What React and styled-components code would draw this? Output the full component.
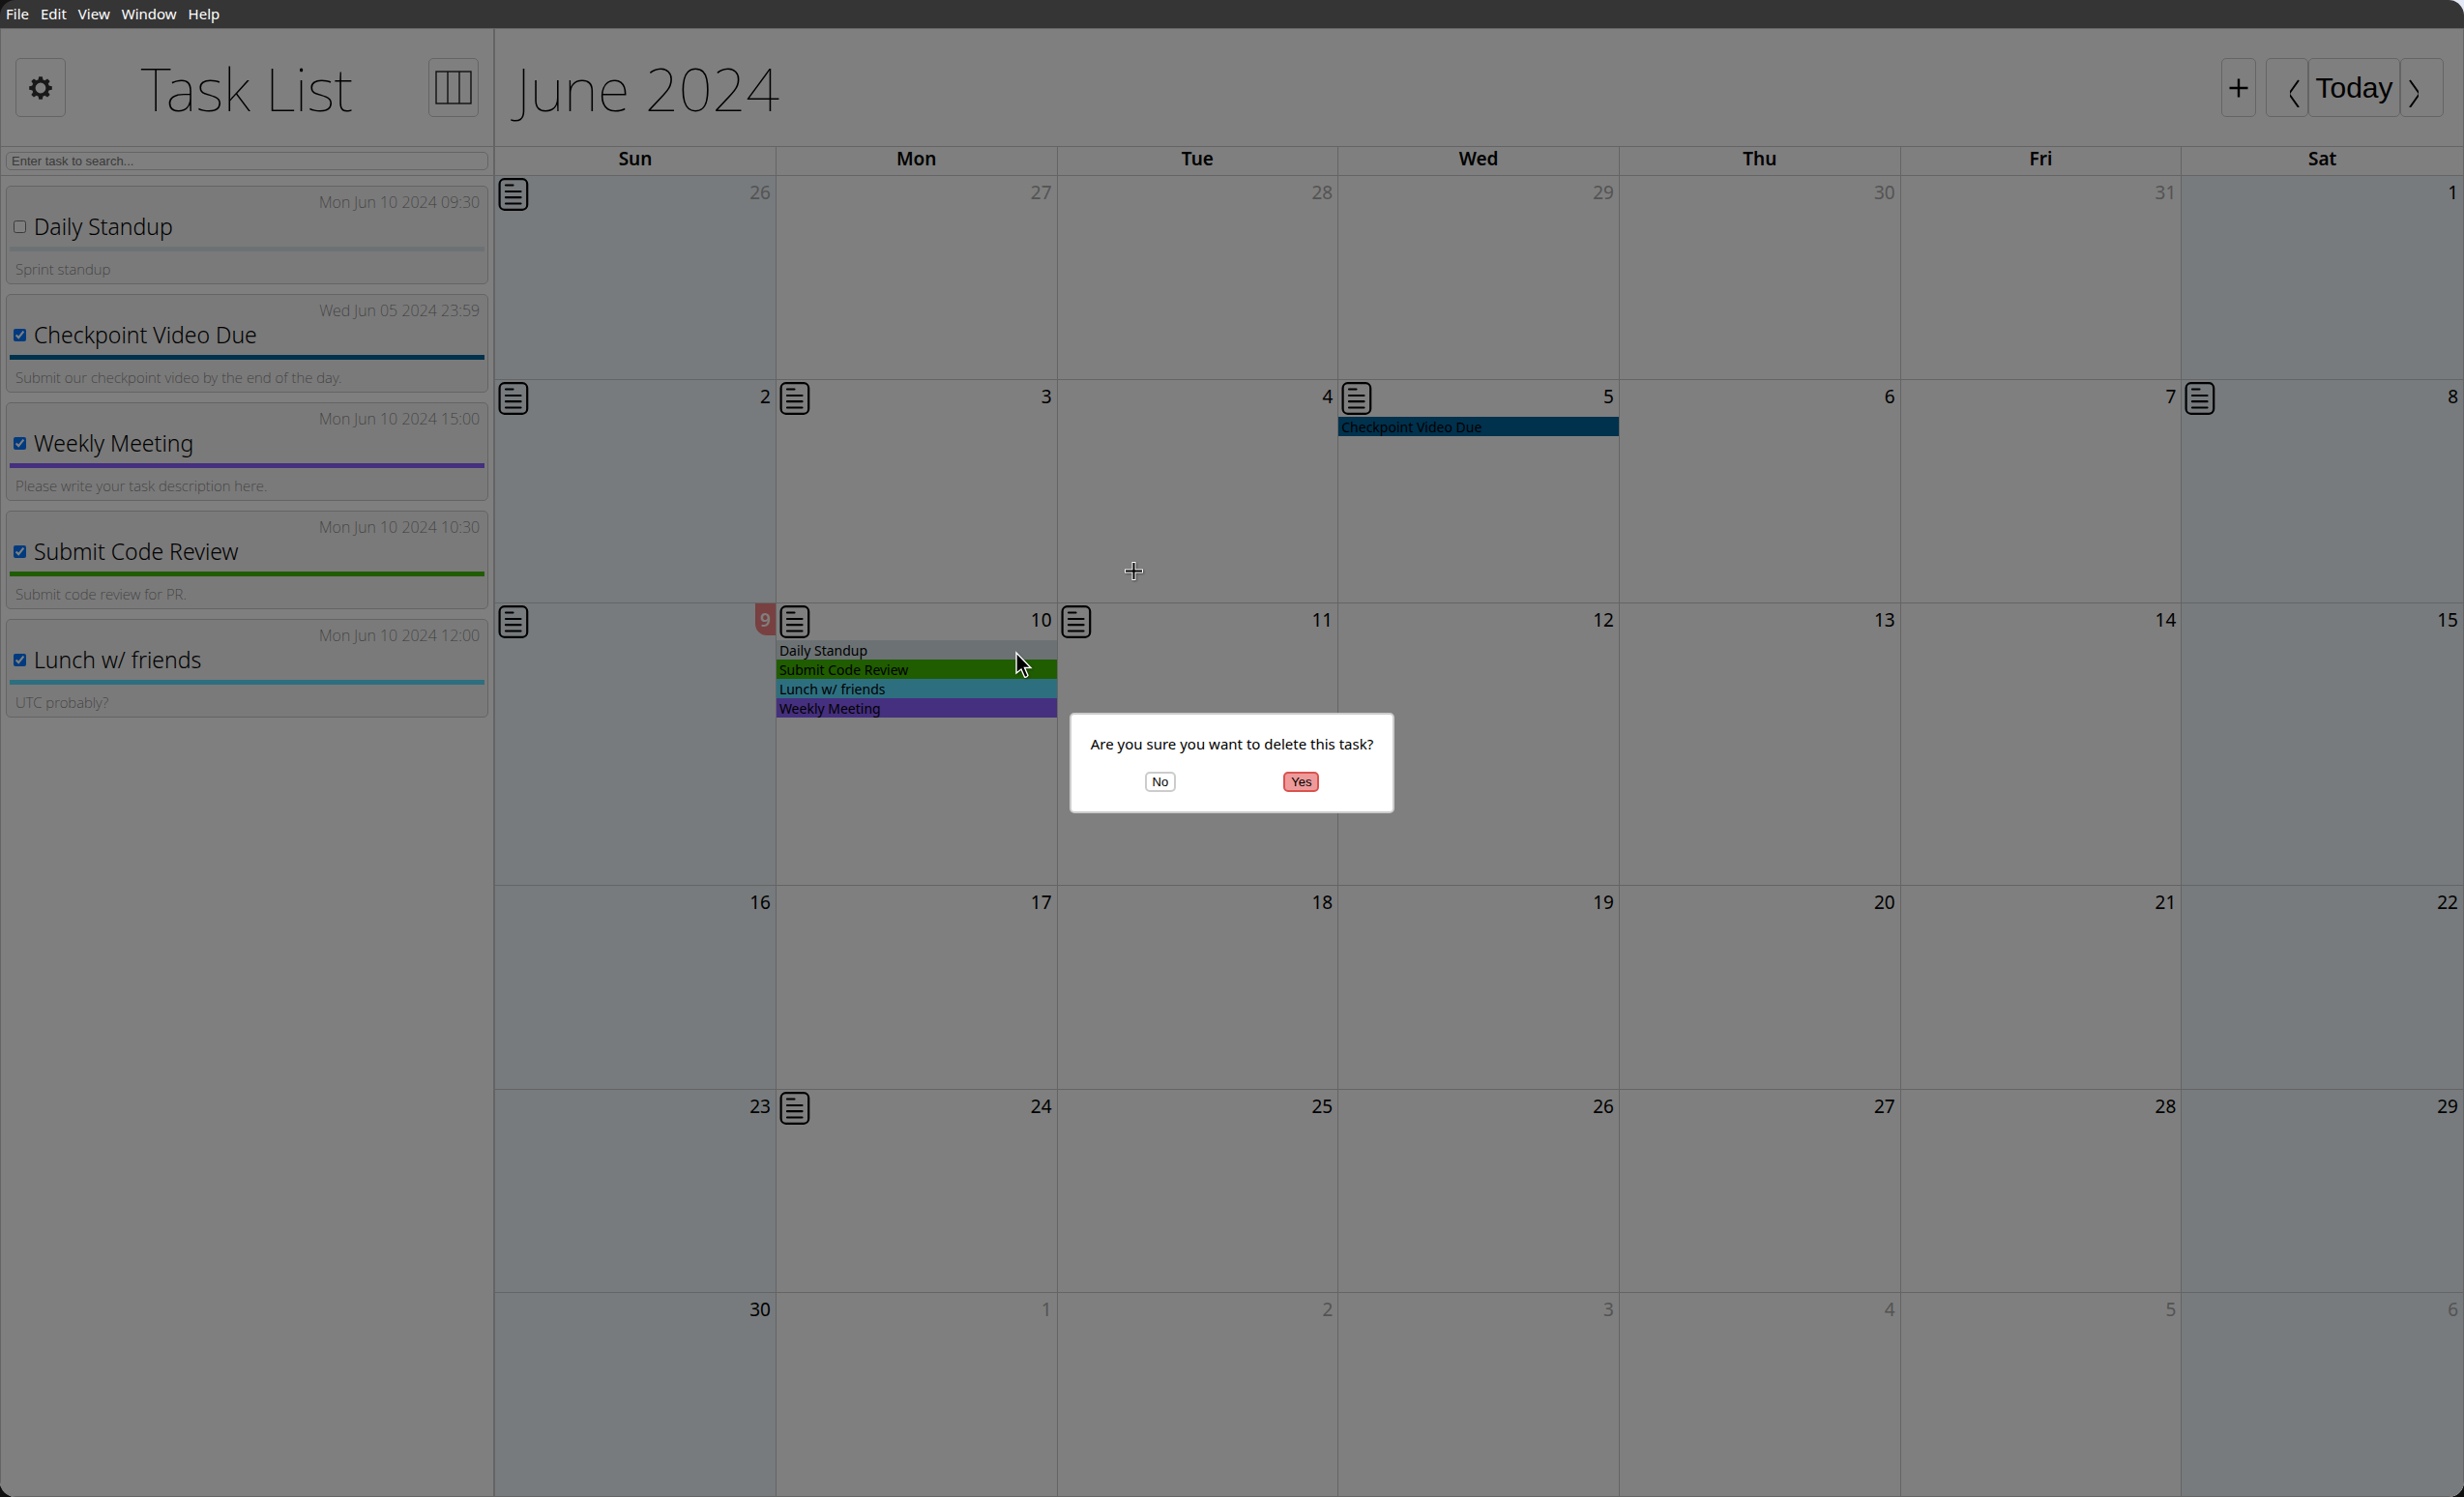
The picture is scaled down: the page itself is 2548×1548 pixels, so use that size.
import React from "react";
import styled, { createGlobalStyle } from "styled-components";

const LINE = "#c8c8c8";

const GlobalStyle = createGlobalStyle`
  * { box-sizing: border-box; }
  html, body, #root { height: 100%; }
  body {
    margin: 0;
    overflow: hidden;
    background: linear-gradient(90deg, #141414 50%, #e4e8f4 50%) top / 100% 50% no-repeat, #101010;
    font-family: "Noto Sans", sans-serif;
    font-size: 16px;
    color: #000;
  }
  button, input { font-family: "Liberation Sans", Arial, sans-serif; color: inherit; }
`;

const AppWindow = styled.div`
  height: 100vh;
  display: flex;
  flex-direction: column;
  border-radius: 16px;
  overflow: hidden;
`;

const MenuBar = styled.nav`
  flex: none;
  height: 29px;
  display: flex;
  align-items: flex-start;
  gap: 12px;
  padding: 4px 6px;
  background: #353535;
`;

const MenuItem = styled.button`
  border: 0;
  padding: 0;
  background: none;
  color: #fff;
  font: 400 15px/20px "Noto Sans", sans-serif;
`;

const Workspace = styled.main`
  flex: 1;
  min-height: 0;
  display: flex;
  position: relative;
  background: #fff;
  border: 1px solid ${LINE};
`;

const Sidebar = styled.aside`
  box-sizing: content-box;
  width: 20%;
  flex: none;
  display: flex;
  flex-direction: column;
  border-right: 2px solid ${LINE};
`;

const PaneHeader = styled.header`
  flex: none;
  height: 122px;
  display: flex;
  align-items: center;
  justify-content: space-between;
  padding: ${(p) => (p.$wide ? "0 20px 0 22px" : "0 15px")};
  border-bottom: 1px solid ${LINE};
`;

const Title = styled.h1`
  margin: 0;
  padding-top: 2px;
  font-size: 61px;
  font-weight: 100;
  line-height: 80px;
  white-space: nowrap;
`;

const ToolButton = styled.button`
  width: ${(p) => p.$width};
  height: 61px;
  padding: 0;
  display: flex;
  align-items: center;
  justify-content: ${(p) => p.$align || "center"};
  background: #fff;
  border: 1px solid ${LINE};
  border-radius: 5px;
  font-size: 30px;
`;

const Tools = styled.div`
  display: flex;
  gap: 10px;
`;

const Pager = styled.div`
  display: flex;
`;

const SearchBar = styled.div`
  flex: none;
  height: 30px;
  display: flex;
  align-items: center;
  padding: 0 5px;
  border-bottom: 1px solid ${LINE};
`;

const SearchInput = styled.input`
  flex: 1;
  height: 19px;
  padding: 0 5px;
  background: #fff;
  border: 1px solid ${LINE};
  border-radius: 5px;
  font-size: 13px;
  &::placeholder { color: #757575; }
`;

const TaskList = styled.ul`
  list-style: none;
  margin: 0;
  padding: 10px 5px;
  display: flex;
  flex-direction: column;
  gap: 10px;
`;

const TaskCard = styled.li`
  display: flex;
  flex-direction: column;
  height: 102px;
  padding: 6px 3px 0;
  background: #f4f4f4;
  border: 1px solid ${LINE};
  border-radius: 5px;
`;

const TaskDate = styled.time`
  align-self: flex-end;
  padding-right: 5px;
  font-size: 16px;
  font-weight: 200;
  line-height: 20px;
  color: #777;
`;

const TaskName = styled.label`
  display: flex;
  align-items: center;
  gap: 8px;
  padding-left: 4px;
  font-size: 23px;
  font-weight: 300;
  line-height: 30px;
`;

const TaskCheck = styled.input`
  width: 13px;
  height: 13px;
  margin: 0;
`;

const TaskBar = styled.div`
  height: 5px;
  margin-top: 6px;
  background: ${(p) => p.$color};
`;

const TaskNote = styled.p`
  margin: 7px 6px 0;
  font-size: 15px;
  font-weight: 200;
  line-height: 22px;
  color: #777;
`;

const Calendar = styled.section`
  flex: 1;
  min-width: 0;
  display: flex;
  flex-direction: column;
`;

const Week = styled.div`
  flex: ${(p) => (p.$head ? "0 0 30px" : "1 1 auto")};
  display: grid;
  grid-template-columns: repeat(7, minmax(0, 1fr));
  border-bottom: 1px solid ${LINE};
  &:last-child { border-bottom: 0; }
`;

const Weekday = styled.div`
  font-weight: 600;
  font-size: 19px;
  line-height: 25px;
  text-align: center;
  border-right: 1px solid ${LINE};
  &:last-child { border-right: 0; }
`;

const Day = styled.div`
  background: ${(p) => (p.$weekend ? "#eef6fb" : "#fff")};
  border-right: 1px solid ${LINE};
  &:last-child { border-right: 0; }
`;

const DayTop = styled.div`
  height: 38px;
  display: flex;
  justify-content: space-between;
  align-items: flex-start;
  padding-left: 3px;
`;

const DayNumber = styled.span`
  margin-left: auto;
  padding: 0 5px;
  height: 33px;
  font-size: 19px;
  line-height: 34px;
  font-weight: ${(p) => (p.$today ? 600 : 400)};
  color: ${(p) => (p.$today ? "#fff" : p.$muted ? "#a8a8a8" : "#000")};
  background: ${(p) => (p.$today ? "#f08080" : "none")};
  border-bottom-left-radius: 12px;
`;

const NoteButton = styled.button`
  margin-top: 2px;
  padding: 0;
  width: 32px;
  height: 34px;
  border: 0;
  background: none;
`;

const EventList = styled.div`
  padding-bottom: 1px;
`;

const Event = styled.div`
  height: 20px;
  padding: 0 3px;
  font-size: 14px;
  line-height: 21px;
  white-space: nowrap;
  background: ${(p) => p.$color};
`;

const Backdrop = styled.div`
  position: absolute;
  inset: -1px;
  display: flex;
  align-items: center;
  justify-content: center;
  background: rgba(0, 0, 0, 0.5);
`;

const Dialog = styled.div`
  width: 336px;
  height: 104px;
  display: flex;
  flex-direction: column;
  align-items: center;
  padding-top: 19px;
  background: #fff;
  border: 2px solid #ccc;
  border-radius: 5px;
`;

const Question = styled.p`
  margin: 0;
  font-size: 15px;
  line-height: 22px;
  white-space: nowrap;
`;

const Answers = styled.div`
  align-self: stretch;
  display: flex;
  justify-content: space-around;
  padding: 18px 20px 0;
`;

const AnswerButton = styled.button`
  height: 21px;
  padding: 0 6px;
  font-size: 13px;
  border: 2px solid ${(p) => (p.$danger ? "#d9534f" : "#ccc")};
  background: ${(p) => (p.$danger ? "#ee9a9a" : "#fff")};
  border-radius: 5px;
`;

const Pointer = styled.svg`
  position: absolute;
  left: ${(p) => p.$x};
  top: ${(p) => p.$y};
  overflow: visible;
  filter: drop-shadow(1px 1px 1px rgba(0, 0, 0, 0.4));
`;

const GearIcon = () => (
  <svg width="24" height="24" viewBox="-12 -12 24 24" aria-hidden="true">
    <circle r="7.2" fill="none" stroke="#333" strokeWidth="3.6" />
    {[0, 45, 90, 135, 180, 225, 270, 315].map((a) => (
      <path key={a} d="M-2.6-8 -1.8-11.8H1.8L2.6-8Z" fill="#333" transform={`rotate(${a})`} />
    ))}
  </svg>
);

const ColumnsIcon = () => (
  <svg width="38" height="35" viewBox="0 0 38 35" fill="none" stroke="#222" strokeWidth="1.4" aria-hidden="true">
    <rect x="1" y="1" width="36" height="33" />
    <path d="M13 1V34M25 1V34" />
  </svg>
);

const PlusIcon = () => (
  <svg width="20" height="20" viewBox="0 0 20 20" stroke="#000" strokeWidth="2.4" aria-hidden="true">
    <path d="M.5 10H19.5M10 .5V19.5" />
  </svg>
);

const AngleIcon = ({ d }) => (
  <svg width="18" height="40" viewBox="0 0 18 40" fill="none" stroke="#000" strokeWidth="2" aria-hidden="true">
    <path d={d} />
  </svg>
);

const NoteIcon = () => (
  <svg width="32" height="34" viewBox="0 0 32 34" fill="none" stroke="#000" strokeWidth="2.2" strokeLinecap="round" aria-hidden="true">
    <rect x="1.6" y="1.2" width="28.6" height="31.6" rx="5" />
    <path d="M8 7.5H15.500M8 14H23.500M8 20.200H23.500M8 26.500H23.500" />
  </svg>
);

const COLORS = {
  pale: "#d8e4e8",
  blue: "#00629b",
  purple: "#8a5eff",
  green: "#41b900",
  cyan: "#5adeff",
};

const tasks = [
  { name: "Daily Standup", date: "Mon Jun 10 2024 09:30", note: "Sprint standup", color: COLORS.pale, done: false },
  { name: "Checkpoint Video Due", date: "Wed Jun 05 2024 23:59", note: "Submit our checkpoint video by the end of the day.", color: COLORS.blue, done: true },
  { name: "Weekly Meeting", date: "Mon Jun 10 2024 15:00", note: "Please write your task description here.", color: COLORS.purple, done: true },
  { name: "Submit Code Review", date: "Mon Jun 10 2024 10:30", note: "Submit code review for PR.", color: COLORS.green, done: true },
  { name: "Lunch w/ friends", date: "Mon Jun 10 2024 12:00", note: "UTC probably?", color: COLORS.cyan, done: true },
];

const events = {
  10: [["Checkpoint Video Due", COLORS.blue]],
  15: [
    ["Daily Standup", COLORS.pale],
    ["Submit Code Review", COLORS.green],
    ["Lunch w/ friends", COLORS.cyan],
    ["Weekly Meeting", COLORS.purple],
  ],
};

const noted = new Set([0, 7, 8, 10, 13, 14, 15, 16, 29]);
const weekdays = ["Sun", "Mon", "Tue", "Wed", "Thu", "Fri", "Sat"];
const weeks = [0, 1, 2, 3, 4, 5];
const TODAY = 14;

function dayNumber(i) {
  if (i < 6) return 26 + i;
  return i < 36 ? i - 5 : i - 35;
}

function DayCell({ index }) {
  const column = index % 7;
  return (
    <Day $weekend={column === 0 || column === 6}>
      <DayTop>
        {noted.has(index) && (
          <NoteButton aria-label="Open journal">
            <NoteIcon />
          </NoteButton>
        )}
        <DayNumber $today={index === TODAY} $muted={index < 6 || index > 35}>
          {dayNumber(index)}
        </DayNumber>
      </DayTop>
      {events[index] && (
        <EventList>
          {events[index].map(([name, color]) => (
            <Event key={name} $color={color}>{name}</Event>
          ))}
        </EventList>
      )}
    </Day>
  );
}

export default function App() {
  return (
    <>
      <GlobalStyle />
      <AppWindow>
        <MenuBar>
          {["File", "Edit", "View", "Window", "Help"].map((m) => (
            <MenuItem key={m}>{m}</MenuItem>
          ))}
        </MenuBar>
        <Workspace>
          <Sidebar>
            <PaneHeader>
              <ToolButton $width="52px" aria-label="Settings"><GearIcon /></ToolButton>
              <Title>Task List</Title>
              <ToolButton $width="52px" aria-label="Columns"><ColumnsIcon /></ToolButton>
            </PaneHeader>
            <SearchBar>
              <SearchInput aria-label="Search tasks" placeholder="Enter task to search..." />
            </SearchBar>
            <TaskList>
              {tasks.map((t) => (
                <TaskCard key={t.name}>
                  <TaskDate>{t.date}</TaskDate>
                  <TaskName>
                    <TaskCheck type="checkbox" defaultChecked={t.done} />
                    {t.name}
                  </TaskName>
                  <TaskBar $color={t.color} />
                  <TaskNote>{t.note}</TaskNote>
                </TaskCard>
              ))}
            </TaskList>
          </Sidebar>
          <Calendar>
            <PaneHeader $wide>
              <Title>June 2024</Title>
              <Tools>
                <ToolButton $width="36px" aria-label="Add task"><PlusIcon /></ToolButton>
                <Pager>
                  <ToolButton $width="44px" $align="flex-end" aria-label="Previous month">
                    <AngleIcon d="M9 12L-1 26L9 40" />
                  </ToolButton>
                  <ToolButton $width="95px">Today</ToolButton>
                  <ToolButton $width="45px" $align="flex-start" aria-label="Next month">
                    <AngleIcon d="M9 12L19 26L9 40" />
                  </ToolButton>
                </Pager>
              </Tools>
            </PaneHeader>
            <Week $head>
              {weekdays.map((d) => <Weekday key={d}>{d}</Weekday>)}
            </Week>
            {weeks.map((w) => (
              <Week key={w}>
                {weekdays.map((d, c) => <DayCell key={d} index={w * 7 + c} />)}
              </Week>
            ))}
          </Calendar>
          <Backdrop>
            <Dialog role="dialog" aria-modal="true" aria-labelledby="question">
              <Question id="question">Are you sure you want to delete this task?</Question>
              <Answers>
                <AnswerButton>No</AnswerButton>
                <AnswerButton $danger>Yes</AnswerButton>
              </Answers>
            </Dialog>
          </Backdrop>
          <Pointer $x="1161px" $y="550px" width="22" height="22" viewBox="0 0 22 22" aria-hidden="true">
            <path d="M1 10.500H20M10.500 1V20" stroke="#fff" strokeWidth="4" />
            <path d="M2 10.500H19M10.500 2V19" stroke="#000" strokeWidth="2" />
          </Pointer>
          <Pointer $x="1049px" $y="644px" width="17" height="28" viewBox="0 0 17 28" aria-hidden="true">
            <path d="M1 1V22L6 18L9.500 26Q11.500 27 13 24.500L9.500 16.500H16Z" fill="#000" stroke="#fff" strokeWidth="1.4" />
          </Pointer>
        </Workspace>
      </AppWindow>
    </>
  );
}
